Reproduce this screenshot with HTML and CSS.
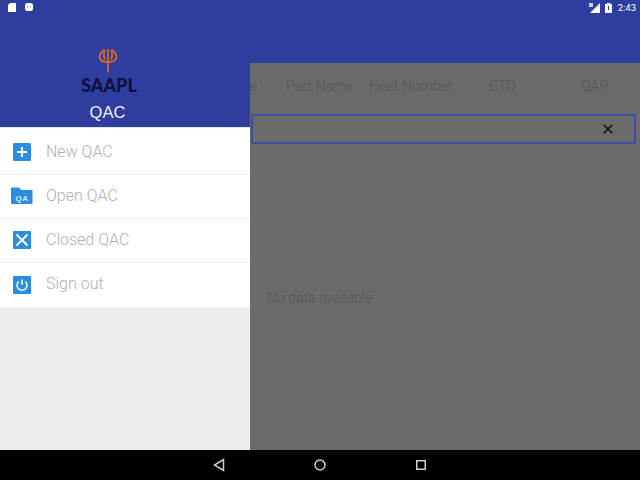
FILE: index.html
```html
<!DOCTYPE html>
<html lang="en">
<head>
<meta charset="utf-8">
<title>QAC</title>
<link rel="stylesheet" href="styles.css">
</head>
<body>
<div class="screen">
  <div class="main">
    <aside class="drawer">
      <header class="drawer-head">
        <div class="status-left">
          <svg class="st-icon" width="8" height="9" viewBox="0 0 8 9"><path d="M2 0h6v9H0V2z" fill="#fff"/></svg>
          <svg class="st-icon" width="8" height="8" viewBox="0 0 8 8"><rect width="8" height="8" rx="2.500" fill="#fff"/><circle cx="2.500" cy="4" r=".7" fill="#8f99cc"/><circle cx="5.500" cy="4" r=".7" fill="#8f99cc"/></svg>
        </div>
        <div class="brand">
          <svg class="trident" width="20" height="24" viewBox="0 0 20 24" fill="none" stroke="#d8622c" stroke-width="1.800">
            <path d="M10 1v23"/>
            <path d="M6.500 1.500C2.500 5 .8 8.500 2 11c1 2 4.500 3 8 3s7-1 8-3c1.200-2.500-.5-6-4.500-9.500"/>
            <path d="M7 2C5.500 5.500 5.700 9 7 11.500M13 2c1.500 3.500 1.300 7 0 9.500"/>
          </svg>
          <div class="saapl">SAAPL</div>
          <div class="qac">QAC</div>
        </div>
      </header>
      <nav class="menu">
        <div class="menu-item">
          <svg width="20" height="20" viewBox="0 0 20 20"><rect x="1" y="1" width="18" height="18" rx="1.500" fill="#2a8ce2"/><path d="M10 5v10M5 10h10" stroke="#fff" stroke-width="2"/></svg>
          <span>New QAC</span>
        </div>
        <div class="menu-item">
          <svg width="22" height="20" viewBox="0 0 22 20"><path d="M0 2.500a1 1 0 0 1 1-1h7l2 2.500h10.500a1 1 0 0 1 1 1V17a1 1 0 0 1-1 1H1a1 1 0 0 1-1-1z" fill="#2a8ce2"/><text x="11" y="14.500" class="qa-text">QA</text></svg>
          <span>Open QAC</span>
        </div>
        <div class="menu-item">
          <svg width="20" height="20" viewBox="0 0 20 20"><rect x="1" y="1" width="18" height="18" rx="1" fill="#2a8ce2"/><path d="M4.500 4.500l11 11M15.500 4.500l-11 11" stroke="#fff" stroke-width="2"/></svg>
          <span>Closed QAC</span>
        </div>
        <div class="menu-item">
          <svg width="20" height="20" viewBox="0 0 20 20"><rect x="1" y="1" width="18" height="18" rx="1" fill="#2a8ce2"/><path d="M6.800 6.500a5 5 0 1 0 6.400 0" fill="none" stroke="#fff" stroke-width="1.500"/><path d="M10 4.500v5.500" stroke="#fff" stroke-width="1.500"/></svg>
          <span>Sign out</span>
        </div>
      </nav>
    </aside>
    <section class="page">
      <div class="appbar">
        <div class="status-right">
          <svg width="12" height="10" viewBox="0 0 12 10"><path d="M11 0v10H1z" fill="#fff"/><path d="M0 0h4v4H0z" fill="#c6cbe6"/></svg>
          <svg width="7" height="10" viewBox="0 0 7 10"><path d="M2 0h3v1h2v9H0V1h2z" fill="#fff"/><path d="M3.500 3v4" stroke="#2f3e9e"/></svg>
          <span class="clock">2:43</span>
        </div>
      </div>
      <div class="content">
        <div class="columns">
          <span class="col col-cut">e</span>
          <span class="col col-part">Part Name</span>
          <span class="col col-heat">Heat Number</span>
          <span class="col col-ctq">CTQ</span>
          <span class="col col-qap">QAP</span>
        </div>
        <div class="search">
          <svg width="10" height="10" viewBox="0 0 10 10"><path d="M.7.700l8.600 8.600M9.300.700L.7 9.300" stroke="#111" stroke-width="1.500"/></svg>
        </div>
        <div class="empty">No data available</div>
      </div>
    </section>
  </div>
  <footer class="navbar">
    <svg width="12" height="14" viewBox="0 0 12 14"><path d="M10.500 1.500v11L1.500 7z" fill="none" stroke="#d0d0d0" stroke-width="1.500"/></svg>
    <svg width="12" height="12" viewBox="0 0 12 12"><circle cx="6" cy="6" r="5" fill="none" stroke="#d0d0d0" stroke-width="1.500"/></svg>
    <svg width="10" height="10" viewBox="0 0 10 10"><rect x=".75" y=".75" width="8.500" height="8.500" fill="none" stroke="#d0d0d0" stroke-width="1.500"/></svg>
  </footer>
</div>
</body>
</html>
```

FILE: styles.css
```css
html, body {
  margin: 0;
  padding: 0;
  width: 640px;
  height: 480px;
  overflow: hidden;
  background: #000;
  font-family: Roboto, "Liberation Sans", sans-serif;
}
.screen {
  width: 640px;
  height: 480px;
  display: flex;
  flex-direction: column;
}
.main {
  height: 450px;
  display: flex;
}
.drawer {
  width: 250px;
  flex: none;
  background: #eeeeee;
  display: flex;
  flex-direction: column;
}
.drawer-head {
  height: 127px;
  box-sizing: border-box;
  background: #2f3e9e;
  display: flex;
  flex-direction: column;
  padding: 3px 0 0 8px;
}
.status-left {
  display: flex;
  gap: 9px;
  align-items: flex-start;
  height: 45px;
}
.brand {
  width: 199px;
  display: flex;
  flex-direction: column;
  align-items: center;
}
.trident {
  display: block;
}
.saapl {
  font-family: Lato, "Liberation Sans", sans-serif;
  font-weight: 900;
  font-size: 18px;
  line-height: 18px;
  color: #0f1140;
  margin-top: 4px;
  margin-left: 3px;
  height: 18px;
}
.qac {
  font-family: "Liberation Sans", sans-serif;
  font-size: 16.500px;
  line-height: 20px;
  color: #eef0fa;
  margin-top: 8px;
}
.menu {
  background: #fff;
  padding-top: 3px;
  border-top: 1px solid #dfe6fa;
}
.menu-item {
  height: 44px;
  box-sizing: border-box;
  display: flex;
  align-items: center;
  padding-left: 12px;
  border-bottom: 1px solid #f3f3f3;
  color: #b0b0b0;
  font-weight: 300;
  font-size: 16px;
}
.menu-item:last-child {
  border-bottom: 0;
}
.menu-item svg {
  flex: none;
  margin-bottom: 1px;
}
.menu-item span {
  margin-left: 14px;
  margin-bottom: 3px;
}
.menu-item:nth-child(2) svg {
  margin-left: -1px;
  margin-right: -1px;
}
.qa-text {
  font-family: "Liberation Sans", sans-serif;
  font-weight: 700;
  font-size: 8px;
  letter-spacing: .5px;
  fill: #dcecfb;
  text-anchor: middle;
}
.page {
  flex: 1;
  display: flex;
  flex-direction: column;
  min-width: 0;
}
.appbar {
  height: 63px;
  flex: none;
  background: #2f3e9e;
}
.status-right {
  display: flex;
  align-items: center;
  justify-content: flex-end;
  gap: 4px;
  height: 15px;
  padding-right: 4px;
  color: #fff;
}
.clock {
  font-size: 9.500px;
  font-weight: 400;
  margin-left: 2px;
}
.content {
  flex: 1;
  background: #6b6b6b;
  display: flex;
  flex-direction: column;
}
.columns {
  height: 51px;
  flex: none;
  display: flex;
  align-items: center;
  padding-bottom: 5px;
  box-sizing: border-box;
  color: #555;
  font-weight: 300;
  font-size: 14.200px;
  white-space: nowrap;
}
.col {
  display: block;
}
.col-cut { width: 36px; }
.col-part { width: 83px; }
.col-heat { width: 120px; }
.col-ctq { width: 92px; }
.search {
  height: 30px;
  box-sizing: border-box;
  margin: 0 4px 0 1px;
  border: 2px solid #3c4ca8;
  border-radius: 2px;
  display: flex;
  align-items: center;
  justify-content: flex-end;
  padding-right: 21px;
}
.empty {
  margin: 145px 0 0 17px;
  color: #555;
  font-weight: 300;
  font-size: 14px;
  line-height: 18px;
}
.navbar {
  height: 30px;
  background: #000;
  display: flex;
  align-items: center;
  padding-left: 213px;
}
.navbar svg:nth-child(1) { margin-right: 89px; }
.navbar svg:nth-child(2) { margin-right: 90px; }
```
